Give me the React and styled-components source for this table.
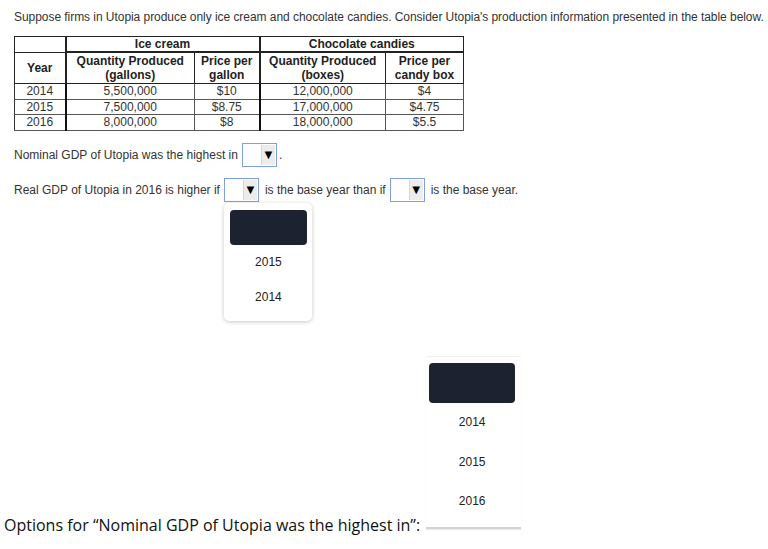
import React from "react";
import styled, { createGlobalStyle } from "styled-components";

const Global = createGlobalStyle`
  html, body { margin: 0; padding: 0; background: #fff; }
  body { font-family: "Liberation Sans", Arial, sans-serif; color: #333; }
`;

const Page = styled.div`
  width: 768px;
  height: 549px;
  overflow: hidden;
  position: relative;
`;

const Content = styled.div`
  padding: 10px 0 0 14px;
  font-size: 12px;
  line-height: 14px;
`;

const Intro = styled.p`
  margin: 0;
  font-size: 12px;
  letter-spacing: -0.05px;
  white-space: nowrap;
`;

const Table = styled.table`
  margin-top: 12px;
  border-collapse: collapse;
  table-layout: fixed;
  width: 449px;
  border: 1.5px solid #111;
  color: #222;
`;

const Th = styled.th`
  font-weight: bold;
  padding: 0;
  height: ${(p) => p.$h || 14}px;
  line-height: 14px;
  text-align: center;
  border: 1px solid #222;
  border-left-width: ${(p) => (p.$thick ? 2 : 1)}px;
  border-bottom-width: ${(p) => (p.$thickBottom ? 2 : 1)}px;
`;

const Td = styled.td`
  padding: 0;
  height: 14.5px;
  line-height: 14px;
  text-align: center;
  color: #333;
  border: 1px solid #555;
  border-left: ${(p) => (p.$thick ? "2px solid #111" : "1px solid #333")};
`;

const Line = styled.div`
  display: flex;
  align-items: center;
  white-space: nowrap;
  margin-top: ${(p) => p.$mt}px;
  gap: 4px;
  position: relative;
`;

const SelectWrap = styled.span`
  position: relative;
  display: inline-flex;
`;

const SelectBox = styled.span`
  display: inline-flex;
  justify-content: flex-end;
  align-items: stretch;
  box-sizing: border-box;
  width: 35px;
  height: 24px;
  border: 1px solid #7f9fe3;
  background: #fff;
  padding: 1px;
`;

const Arrow = styled.span`
  width: 13px;
  background: #ececec;
  border-left: 1px solid #d6d6d6;
  display: flex;
  align-items: center;
  justify-content: center;
  font-size: 13px;
  color: #000;
  line-height: 1;
`;

const Popover = styled.div`
  position: absolute;
  top: 25px;
  left: 0;
  width: 88px;
  box-sizing: border-box;
  padding: 7px 5px 6px 6px;
  background: #fff;
  border-radius: 5px;
  box-shadow: 0 1px 4px rgba(0, 0, 0, 0.22);
  z-index: 2;
`;

const Selected = styled.div`
  height: ${(p) => p.$h}px;
  background: #1d2230;
  border-radius: 4px;
`;

const Option = styled.div`
  height: ${(p) => p.$h}px;
  display: flex;
  align-items: center;
  justify-content: center;
  font-size: 12px;
  color: #222;
`;

const Bottom = styled.div`
  display: flex;
  align-items: flex-end;
  gap: 6px;
  margin-top: 154px;
  padding-left: 4px;
`;

const Caption = styled.div`
  font-family: "Open Sans", "Noto Sans", sans-serif;
  font-size: 16px;
  line-height: 20px;
  color: #111;
  white-space: nowrap;
  margin-bottom: -6px;
`;

const Panel = styled.div`
  width: 95px;
  box-sizing: border-box;
  padding: 6px 6px 6px 3px;
  background: #fff;
  border-top: 1px solid #f0f0f0;
  border-bottom: 2px solid #d3d3d3;
  box-shadow: 0 1px 1px rgba(0, 0, 0, 0.08);
`;

function Select({ children }) {
  return (
    <SelectWrap>
      <SelectBox>
        <Arrow>▼</Arrow>
      </SelectBox>
      {children}
    </SelectWrap>
  );
}

const rows = [
  ["2014", "5,500,000", "$10", "12,000,000", "$4"],
  ["2015", "7,500,000", "$8.75", "17,000,000", "$4.75"],
  ["2016", "8,000,000", "$8", "18,000,000", "$5.5"],
];

export default function App() {
  return (
    <Page>
      <Global />
      <Content>
        <Intro>
          Suppose firms in Utopia produce only ice cream and chocolate candies. Consider Utopia's production
          information presented in the table below.
        </Intro>
        <Table>
          <colgroup>
            <col style={{ width: 51 }} />
            <col style={{ width: 129 }} />
            <col style={{ width: 65 }} />
            <col style={{ width: 126 }} />
            <col style={{ width: 78 }} />
          </colgroup>
          <thead>
            <tr>
              <Th></Th>
              <Th colSpan={2} $thick $thickBottom>
                Ice cream
              </Th>
              <Th colSpan={2} $thick $thickBottom>
                Chocolate candies
              </Th>
            </tr>
            <tr>
              <Th $h={30} style={{ borderTop: "none" }}>Year</Th>
              <Th $h={30} $thick>
                Quantity Produced
                <br />
                (gallons)
              </Th>
              <Th $h={30}>
                Price per
                <br />
                gallon
              </Th>
              <Th $h={30} $thick>
                Quantity Produced
                <br />
                (boxes)
              </Th>
              <Th $h={30}>
                Price per
                <br />
                candy box
              </Th>
            </tr>
          </thead>
          <tbody>
            {rows.map((r) => (
              <tr key={r[0]}>
                <Td>{r[0]}</Td>
                <Td $thick>{r[1]}</Td>
                <Td>{r[2]}</Td>
                <Td $thick>{r[3]}</Td>
                <Td>{r[4]}</Td>
              </tr>
            ))}
          </tbody>
        </Table>
        <Line $mt={12}>
          <span>Nominal GDP of Utopia was the highest in</span>
          <Select />
          <span style={{ marginLeft: -2 }}>.</span>
        </Line>
        <Line $mt={11}>
          <span>Real GDP of Utopia in 2016 is higher if</span>
          <Select>
            <Popover>
              <Selected $h={35} />
              <Option $h={35}>2015</Option>
              <Option $h={35}>2014</Option>
            </Popover>
          </Select>
          <span style={{ marginLeft: 2 }}>is the base year than if</span>
          <Select />
          <span style={{ marginLeft: 2 }}>is the base year.</span>
        </Line>
      </Content>
      <Bottom>
        <Caption>Options for “Nominal GDP of Utopia was the highest in”:</Caption>
        <Panel>
          <Selected $h={40} />
          <Option $h={39.5}>2014</Option>
          <Option $h={39.5}>2015</Option>
          <Option $h={39.5}>2016</Option>
        </Panel>
      </Bottom>
    </Page>
  );
}
